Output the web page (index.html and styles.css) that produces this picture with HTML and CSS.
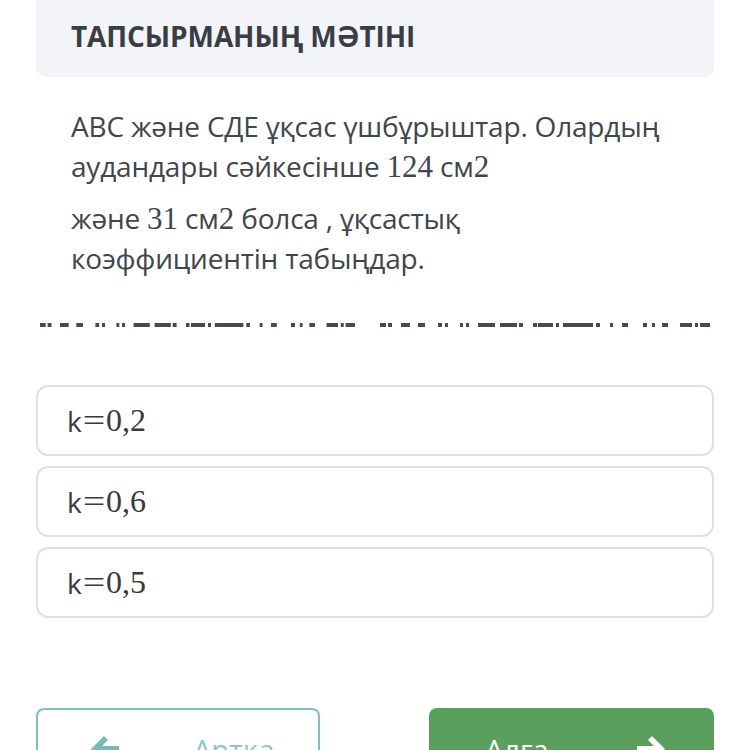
FILE: index.html
```html
<!DOCTYPE html>
<html>
<head>
<meta charset="utf-8">
<link rel="stylesheet" href="styles.css">
</head>
<body>
<div class="page">
  <div class="head-box">
    <h1 class="title">ТАПСЫРМАНЫҢ МӘТІНІ</h1>
  </div>
  <div class="task">
    <p class="para">АВС және СДЕ ұқсас үшбұрыштар. Олардың аудандары сәйкесінше <span class="m">124</span> см<span class="m">2</span></p>
    <p class="para">және <span class="m">31</span> см<span class="m">2</span> болса , ұқсастық<br>коэффициентін табыңдар.</p>
  </div>
  <svg class="dashes" viewBox="36 0 678 6" width="678" height="6">
    <g fill="#464a54">
      <rect x="40" y="1" width="5.7" height="4"/><rect x="47.6" y="1" width="3.9" height="4"/><rect x="60" y="1" width="8.7" height="4"/><rect x="76.3" y="1" width="6.7" height="4"/><rect x="95.4" y="1" width="3.8" height="4"/><rect x="102" y="1" width="3" height="4"/><rect x="116.4" y="1" width="2.9" height="4"/><rect x="122" y="1" width="3" height="4"/><rect x="133.6" y="1" width="16.2" height="4"/><rect x="154.6" y="1" width="16.2" height="4"/><rect x="172.7" y="1" width="3.9" height="4"/><rect x="186" y="1" width="3.5" height="4"/><rect x="191" y="1" width="14" height="4"/><rect x="208" y="1" width="3" height="4"/><rect x="214.8" y="1" width="28.6" height="4"/><rect x="246.3" y="1" width="3.7" height="4"/><rect x="259.7" y="1" width="2.8" height="4"/><rect x="271" y="1" width="5.8" height="4"/><rect x="291" y="1" width="4" height="4"/><rect x="299.8" y="1" width="2.8" height="4"/><rect x="309.3" y="1" width="5.7" height="4"/><rect x="326.5" y="1" width="11.5" height="4"/><rect x="340.8" y="1" width="2.9" height="4"/><rect x="345.6" y="1" width="9.4" height="4"/>
      <rect x="380" y="1" width="6" height="4"/><rect x="388" y="1" width="4" height="4"/><rect x="401" y="1" width="9" height="4"/><rect x="418" y="1" width="7" height="4"/><rect x="438" y="1" width="4" height="4"/><rect x="445" y="1" width="3" height="4"/><rect x="460" y="1" width="3" height="4"/><rect x="466" y="1" width="3" height="4"/><rect x="478" y="1" width="17" height="4"/><rect x="500" y="1" width="17" height="4"/><rect x="519" y="1" width="4" height="4"/><rect x="533" y="1" width="4" height="4"/><rect x="538" y="1" width="15" height="4"/><rect x="556" y="1" width="3" height="4"/><rect x="563" y="1" width="30" height="4"/><rect x="596" y="1" width="4" height="4"/><rect x="610" y="1" width="3" height="4"/><rect x="622" y="1" width="6" height="4"/><rect x="643" y="1" width="4" height="4"/><rect x="652" y="1" width="3" height="4"/><rect x="662" y="1" width="6" height="4"/><rect x="680" y="1" width="12" height="4"/><rect x="695" y="1" width="3" height="4"/><rect x="700" y="1" width="10" height="4"/>
    </g>
  </svg>
  <div class="options">
    <div class="option"><span class="k">k</span><span class="mo"><span class="eq">=</span>0,2</span></div>
    <div class="option"><span class="k">k</span><span class="mo"><span class="eq">=</span>0,6</span></div>
    <div class="option"><span class="k">k</span><span class="mo"><span class="eq">=</span>0,5</span></div>
  </div>
  <div class="nav">
    <div class="btn btn-back">
      <svg class="arrow" viewBox="0 0 32 30" width="32" height="30"><path d="M2 15 L15 2 L19 6 L13 12 L30 12 L30 18 L13 18 L19 24 L15 28 Z" fill="#79b9b9"/></svg>
      <span class="btn-label">Артқа</span>
    </div>
    <div class="btn btn-next">
      <span class="btn-label">Алға</span>
      <svg class="arrow" viewBox="0 0 32 30" width="32" height="30"><path d="M30 15 L17 2 L13 6 L19 12 L2 12 L2 18 L19 18 L13 24 L17 28 Z" fill="#ffffff"/></svg>
    </div>
  </div>
</div>
</body>
</html>
```
FILE: styles.css
```css
html, body {
  margin: 0;
  padding: 0;
  background: #ffffff;
  overflow: hidden;
}
.page {
  width: 750px;
  height: 750px;
  padding: 0 36px;
  box-sizing: border-box;
  font-family: "Open Sans", "Noto Sans", sans-serif;
  color: #3d4149;
}
.head-box {
  background: #f3f4f7;
  height: 77px;
  border-radius: 0 0 10px 10px;
  padding: 0 35px 6px;
  display: flex;
  align-items: center;
  box-sizing: border-box;
}
.title {
  margin: 0;
  font-size: 28px;
  font-weight: 700;
  letter-spacing: -0.1px;
  color: #3a3d46;
}
.task {
  padding: 29px 20px 0 35px;
  display: flex;
  flex-direction: column;
  gap: 12px;
}
.para {
  margin: 0;
  font-size: 28px;
  line-height: 40px;
  letter-spacing: -0.2px;
  color: #41454d;
}
.m {
  font-family: "Liberation Serif", "DejaVu Serif", serif;
  font-size: 31px;
  line-height: 1;
  letter-spacing: 0;
}
.dashes {
  display: block;
  margin-top: 44px;
}
.options {
  margin-top: 57px;
  display: flex;
  flex-direction: column;
  gap: 10px;
}
.option {
  height: 71px;
  box-sizing: border-box;
  border: 2px solid #e1e1e1;
  border-radius: 12px;
  padding: 0 29px;
  display: flex;
  align-items: center;
  color: #3a3a3a;
}
.k {
  font-family: "Open Sans", sans-serif;
  font-size: 28px;
}
.mo {
  font-family: "Liberation Serif", "DejaVu Serif", serif;
  font-size: 32px;
}
.eq {
  display: inline-block;
  width: 0.76em;
  text-align: center;
  transform: scaleX(1.25);
}
.nav {
  margin-top: 90px;
  display: flex;
  justify-content: space-between;
}
.btn {
  width: 284px;
  height: 82px;
  box-sizing: border-box;
  border-radius: 8px;
  display: flex;
  align-items: center;
  font-size: 29px;
}
.btn-back {
  border: 2px solid #80c0c0;
  background: #ffffff;
  color: #8cc6c6;
  padding-left: 51px;
}
.btn-back .btn-label {
  margin-left: 72px;
}
.btn-next {
  width: 285px;
  background: #5aa05c;
  color: #ffffff;
  padding-left: 56px;
}
.btn-next .btn-label {
  margin-right: 86px;
}
```
